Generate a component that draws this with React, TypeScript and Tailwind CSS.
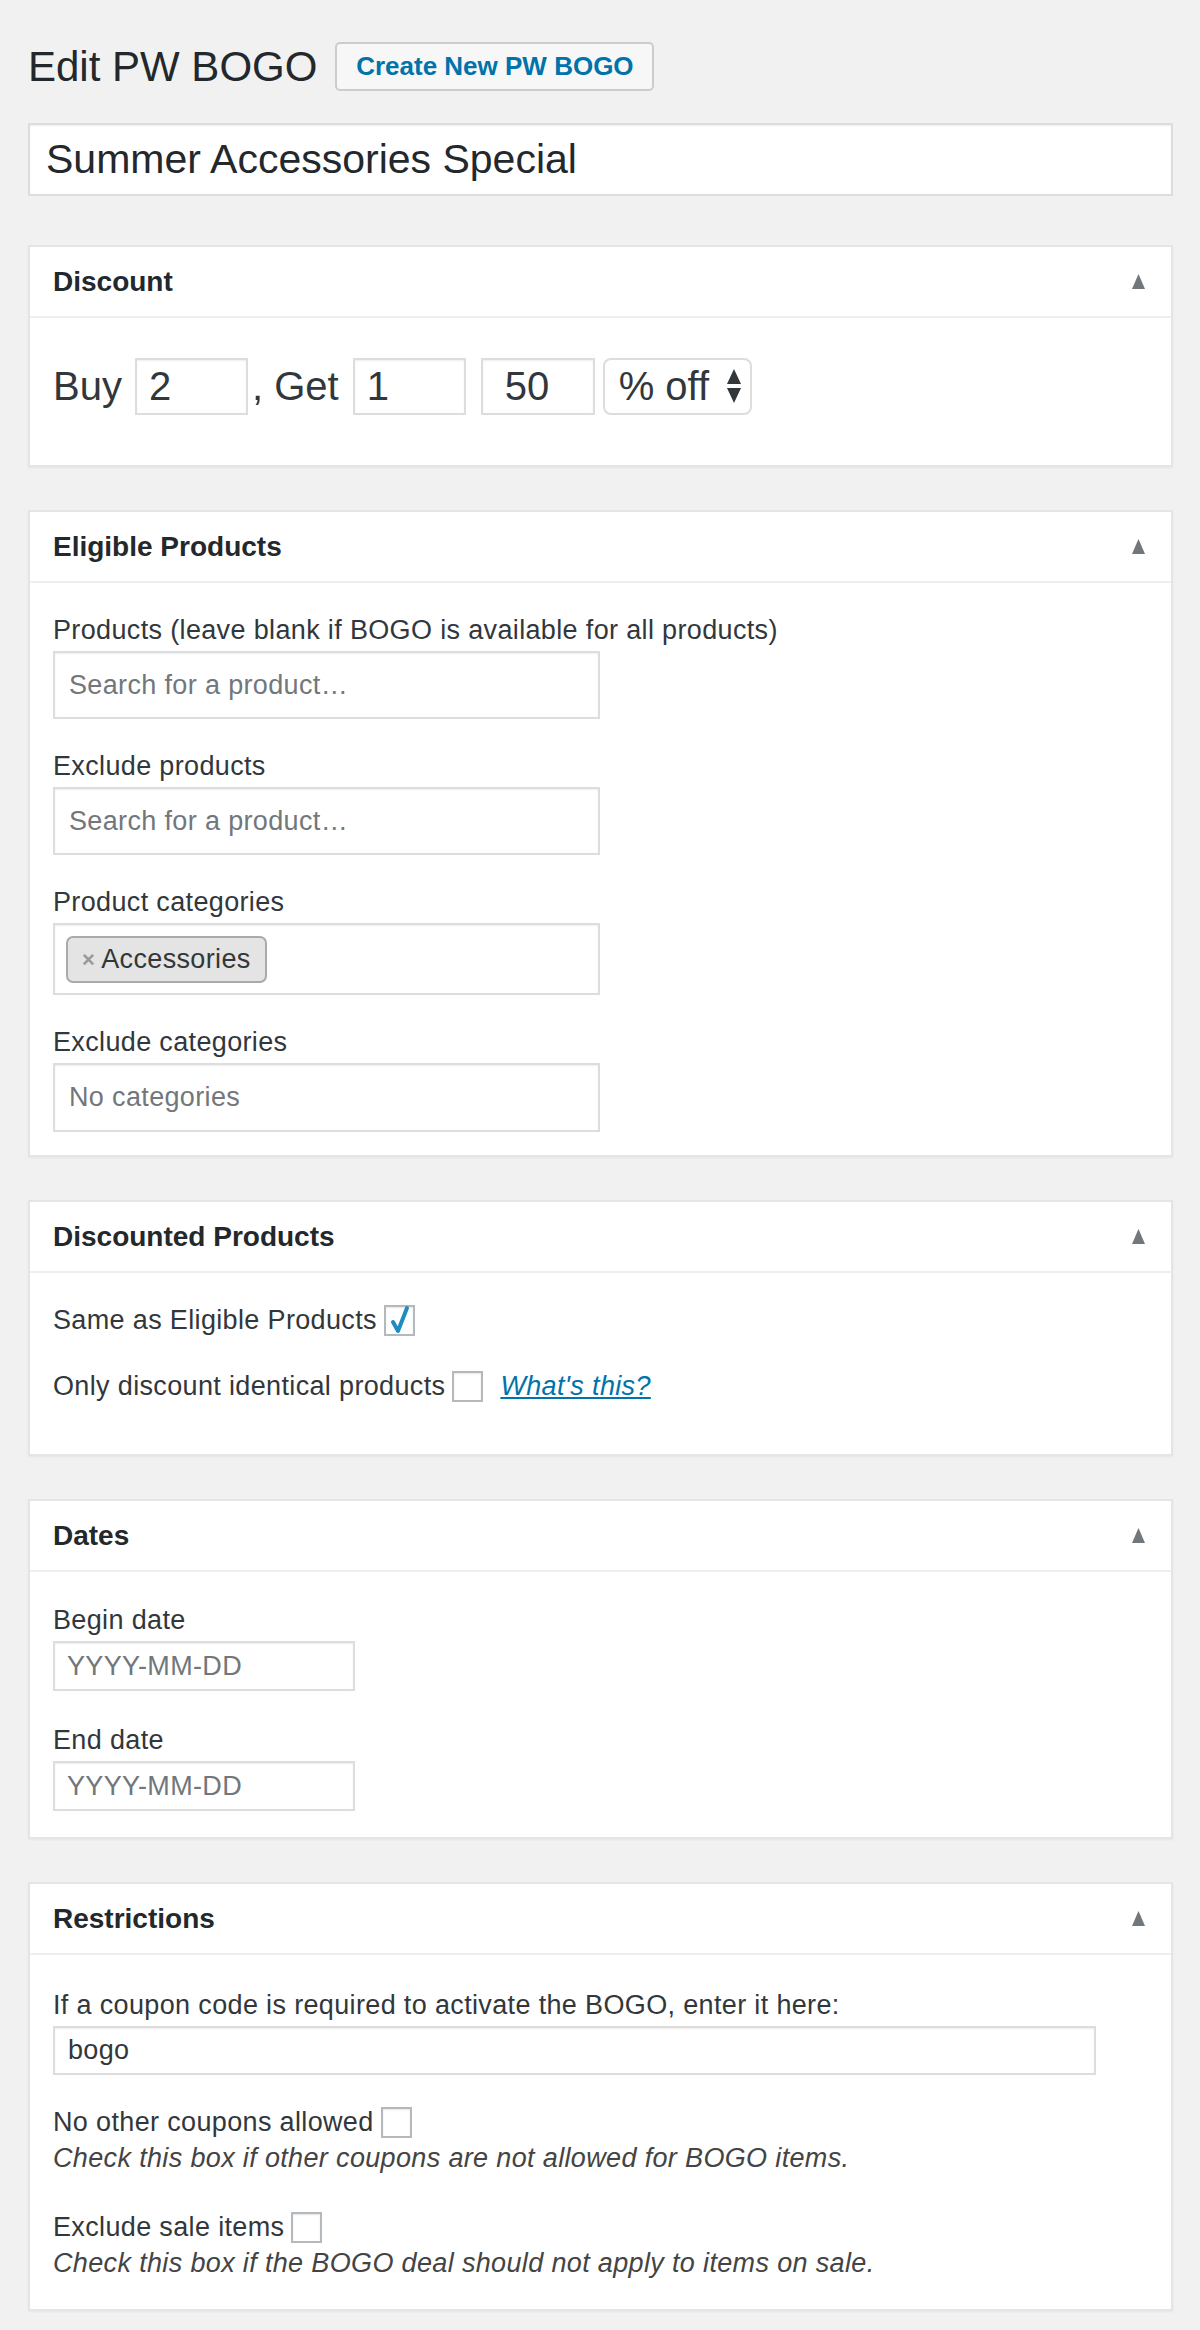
import React from "react";

const Panel = ({
  title,
  children,
  bodyClass,
}: {
  title: string;
  children: React.ReactNode;
  bodyClass: string;
}) => (
  <div className="bg-white border-2 border-[#e5e5e5] shadow-[0_1px_2px_rgba(0,0,0,0.05)]">
    <div className="flex items-center justify-between h-[71px] pl-[23px] pr-[26px] border-b-2 border-[#eeeeee]">
      <h2 className="text-[28px] font-bold text-[#23282d]">{title}</h2>
      <svg width="13" height="15" viewBox="0 0 13 15" className="text-[#72777c]">
        <path d="M6.5 0 L13 15 L0 15 Z" fill="currentColor" />
      </svg>
    </div>
    <div className={`tracking-[0.35px] ${bodyClass}`}>{children}</div>
  </div>
);

const Checkbox = ({ checked }: { checked?: boolean }) => (
  <span className="relative inline-flex w-[31px] h-[31px] border-2 border-[#b4b9be] bg-white shadow-[inset_0_1px_2px_rgba(0,0,0,0.1)] align-middle">
    {checked && (
      <svg
        width="26"
        height="32"
        viewBox="0 0 26 32"
        className="absolute left-[2px] top-[-4px]"
      >
        <path
          d="M5 19 L10 28 L19 5"
          fill="none"
          stroke="#1e8cbe"
          strokeWidth="4"
          strokeLinecap="round"
          strokeLinejoin="round"
        />
      </svg>
    )}
  </span>
);

const Field = ({ label, children }: { label: string; children: React.ReactNode }) => (
  <div className="flex flex-col">
    <label className="text-[27px] leading-[38px] text-[#32373c] mb-[2px]">{label}</label>
    {children}
  </div>
);

const inputBox =
  "border-2 border-[#dddddd] bg-white shadow-[inset_0_1px_2px_rgba(0,0,0,0.07)]";

export default function App() {
  return (
    <div className="min-h-[2330px] bg-[#f1f1f1] font-['Liberation_Sans',Arial,sans-serif] pl-[28px] pr-[27px] pt-[42px] pb-[25px]">
      <div className="flex items-center h-[49px]">
        <h1 className="text-[42px] leading-none text-[#23282d]">Edit PW BOGO</h1>
        <button
          type="button"
          className="ml-[18px] h-[49px] w-[319px] rounded-[5px] border-2 border-[#cccccc] bg-[#f7f7f7] text-[26px] font-bold text-[#0073aa]"
        >
          Create New PW BOGO
        </button>
      </div>

      <div className={`mt-[32px] h-[73px] flex items-center px-[16px] ${inputBox}`}>
        <span className="text-[41px] text-[#23282d]">Summer Accessories Special</span>
      </div>

      <div className="mt-[49px] flex flex-col gap-[43px]">
        <Panel title="Discount" bodyClass="pt-[38px] pb-[49px] px-[23px]">
          <div className="flex items-center text-[40px] text-[#32373c] tracking-normal">
            <span>Buy</span>
            <span className={`ml-[13px] w-[113px] h-[57px] flex items-center px-[12px] ${inputBox}`}>2</span>
            <span className="ml-[4px]">, Get</span>
            <span className={`ml-[14px] w-[113px] h-[57px] flex items-center px-[12px] ${inputBox}`}>1</span>
            <span className={`ml-[15px] w-[114px] h-[57px] flex items-center px-[22px] ${inputBox}`}>50</span>
            <span className="ml-[8px] w-[149px] h-[57px] flex items-center justify-between pl-[14px] pr-[8px] border-2 border-[#dddddd] rounded-[8px] bg-white">
              <span>% off</span>
              <svg width="16" height="36" viewBox="0 0 16 36">
                <path d="M8 1 L15 16 L1 16 Z" fill="#32373c" />
                <path d="M1 20 L15 20 L8 35 Z" fill="#32373c" />
              </svg>
            </span>
          </div>
        </Panel>

        <Panel title="Eligible Products" bodyClass="pt-[28px] pb-[23px] px-[23px] flex flex-col gap-[28px]">
          <Field label="Products (leave blank if BOGO is available for all products)">
            <div className={`w-[547px] h-[68px] flex items-center px-[14px] text-[27px] text-[#72777c] ${inputBox}`}>
              Search for a product…
            </div>
          </Field>
          <Field label="Exclude products">
            <div className={`w-[547px] h-[68px] flex items-center px-[14px] text-[27px] text-[#72777c] ${inputBox}`}>
              Search for a product…
            </div>
          </Field>
          <Field label="Product categories">
            <div className={`w-[547px] h-[72px] flex items-center px-[11px] ${inputBox}`}>
              <span className="flex items-center h-[47px] px-[14px] rounded-[7px] border-2 border-[#aaaaaa] bg-[#e4e4e4] text-[27px] text-[#32373c]">
                <span className="text-[22px] font-bold text-[#999999] mr-[6px]">×</span>
                Accessories
              </span>
            </div>
          </Field>
          <Field label="Exclude categories">
            <div className={`w-[547px] h-[69px] flex items-center px-[14px] text-[27px] text-[#72777c] ${inputBox}`}>
              No categories
            </div>
          </Field>
        </Panel>

        <Panel title="Discounted Products" bodyClass="pt-[25px] pb-[46px] px-[23px] flex flex-col gap-[22px] text-[27px] text-[#32373c]">
          <div className="flex items-center h-[44px]">
            <span>Same as Eligible Products</span>
            <span className="ml-[7px] flex">
              <Checkbox checked />
            </span>
          </div>
          <div className="flex items-center h-[44px]">
            <span>Only discount identical products</span>
            <span className="ml-[7px] flex">
              <Checkbox />
            </span>
            <a className="ml-[17px] italic underline text-[#0073aa]">What's this?</a>
          </div>
        </Panel>

        <Panel title="Dates" bodyClass="pt-[29px] pb-[26px] px-[23px] flex flex-col gap-[30px]">
          <Field label="Begin date">
            <div className={`w-[302px] h-[50px] flex items-center px-[12px] text-[27px] text-[#72777c] ${inputBox}`}>
              YYYY-MM-DD
            </div>
          </Field>
          <Field label="End date">
            <div className={`w-[302px] h-[50px] flex items-center px-[12px] text-[27px] text-[#72777c] ${inputBox}`}>
              YYYY-MM-DD
            </div>
          </Field>
        </Panel>

        <Panel title="Restrictions" bodyClass="pt-[31px] pb-[27px] px-[23px] flex flex-col text-[27px] text-[#32373c]">
          <Field label="If a coupon code is required to activate the BOGO, enter it here:">
            <div className={`w-[1043px] h-[49px] flex items-center px-[13px] text-[27px] text-[#32373c] ${inputBox}`}>
              bogo
            </div>
          </Field>
          <div className="mt-[30px] flex items-center h-[34px]">
            <span>No other coupons allowed</span>
            <span className="ml-[7px] flex">
              <Checkbox />
            </span>
          </div>
          <p className="leading-[38px] italic text-[#444444]">
            Check this box if other coupons are not allowed for BOGO items.
          </p>
          <div className="mt-[33px] flex items-center h-[34px]">
            <span>Exclude sale items</span>
            <span className="ml-[7px] flex">
              <Checkbox />
            </span>
          </div>
          <p className="leading-[38px] italic text-[#444444]">
            Check this box if the BOGO deal should not apply to items on sale.
          </p>
        </Panel>
      </div>
    </div>
  );
}
